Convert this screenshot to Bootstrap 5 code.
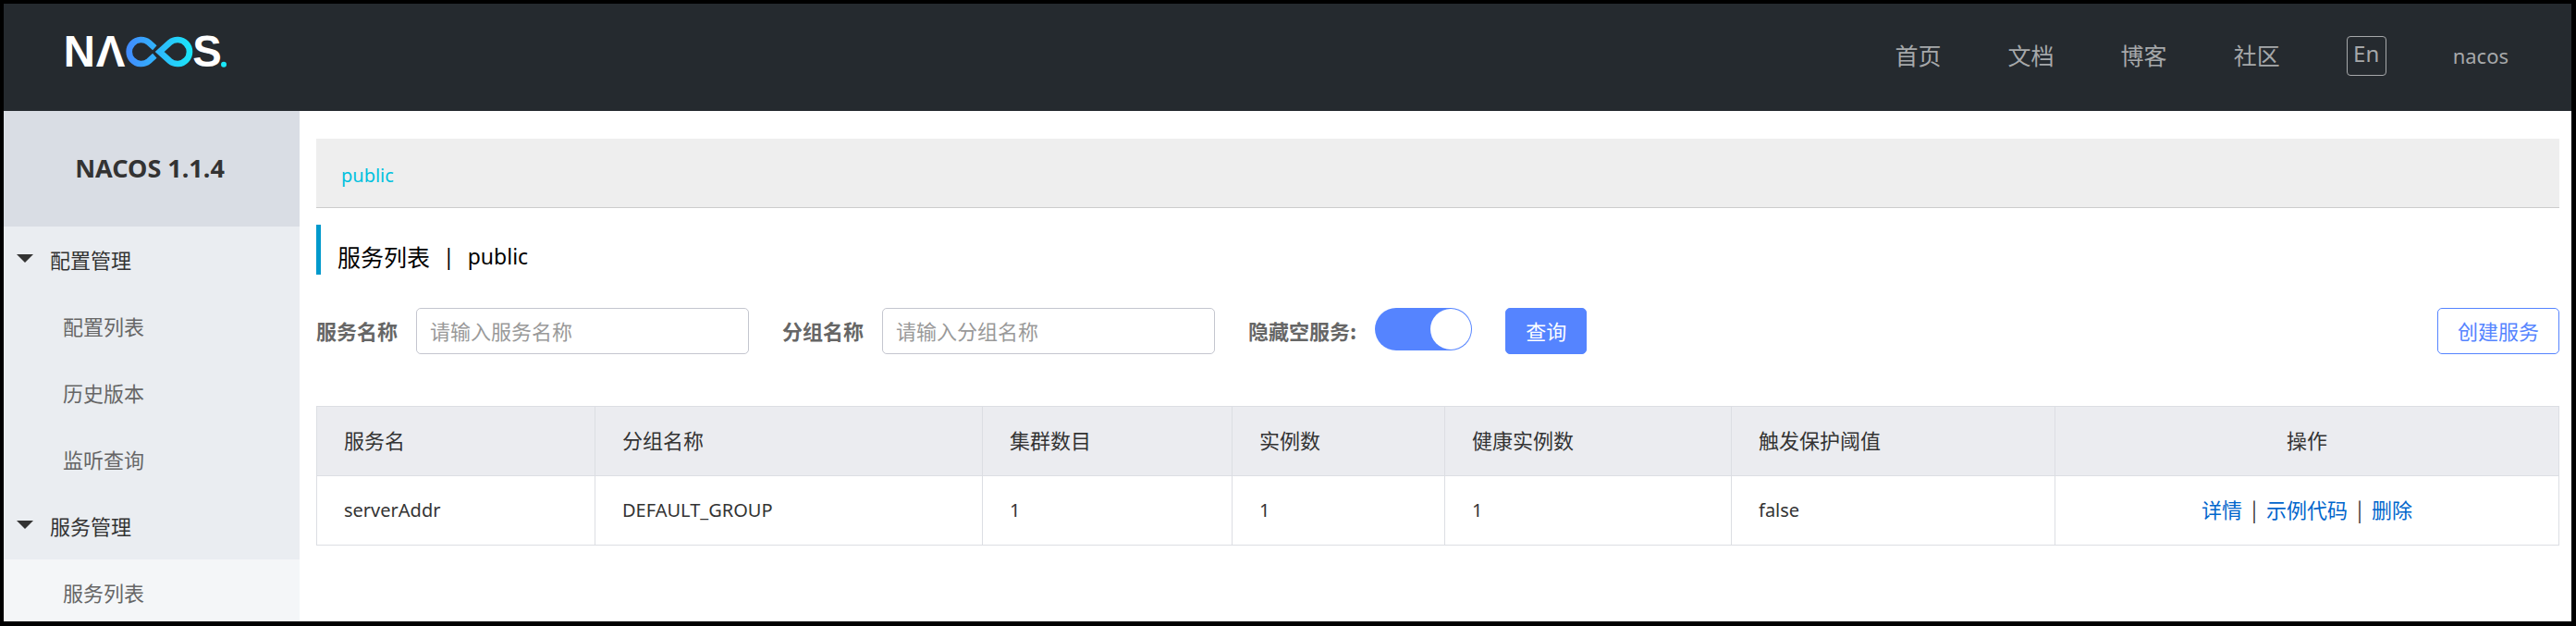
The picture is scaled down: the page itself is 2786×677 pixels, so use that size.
<!DOCTYPE html>
<html lang="zh-CN">
<head>
<meta charset="utf-8">
<meta name="viewport" content="width=device-width, initial-scale=1">
<title>NACOS</title>
<link href="https://cdn.jsdelivr.net/npm/bootstrap@5.3.0/dist/css/bootstrap.min.css" rel="stylesheet">
<style>
  body { font-family: "Noto Sans", "Noto Sans CJK SC", sans-serif; font-size: 20px; color: #333; }
  .zh { font-size: 22px; font-family: "Noto Sans CJK SC", sans-serif; }
  .shell { border: 4px solid #000; border-right-width: 5px; border-bottom-width: 5px; background: #fff; }

  .topbar { min-height: 116px; background: #252a2f; padding: 0 68px 4px; }
  .topbar .logo { margin-bottom: 8px; }
  .topbar .logo svg { overflow: visible; }
  .topbar nav { gap: 72px; }
  .topbar nav a { color: #a6a8aa; text-decoration: none; font-size: 22px; line-height: 40px; }
  .topbar nav a.zh { font-size: 25px; padding-bottom: 2px; }
  .lang { width: 43px; height: 43px; font-size: 24px; line-height: 36px; padding: 0 0 5px; color: #a6a8aa; background: none; border: 1px solid #a6a8aa; border-radius: 4px; }

  .body-row { min-height: 0; }
  .side { width: 320px; background: #eaedf1; overflow-y: auto; scrollbar-width: none; }
  .side-title { height: 125px; background: #d9dde4; font-size: 27px; padding-right: 4px; }
  .side button, .side a { height: 72px; width: 100%; display: flex; align-items: center; text-decoration: none; background: none; border: 0; }
  .side button { padding: 0 14px 2px; gap: 18px; color: #333; }
  .side button svg { margin-bottom: 2px; }
  .side a { padding: 0 0 2px 64px; color: #666; }
  .side a.active { background: #f4f6f8; }

  .content { padding: 30px 13px 30px 18px; }
  .ns-bar { height: 75px; background: #eee; border-bottom: 1px solid #ccc; padding: 6px 27px 0; }
  .ns-bar a { color: #00c1de; text-decoration: none; }
  .page-title { margin: 18px 0 0; height: 54px; border-left: 5px solid #09c; padding: 15px 0 0 18px; gap: 14px; font-size: 23px; line-height: 38px; font-weight: 400; color: #000; }
  .page-title .zh { font-size: 25px; }
  .filters { margin-top: 36px; }
  .filters label { width: 88px; white-space: nowrap; font-weight: 700; color: #666; line-height: 48px; padding-bottom: 2px; }
  .filters label.wide { width: auto; }
  .filters .form-control { width: 360px; height: 50px; border: 1px solid #c4c6cf; border-radius: 5px; padding: 0 14px 3px; margin: 0 36px 0 20px; flex: none; }
  .filters .form-control::placeholder { color: #999; }
  .filters .toggle { appearance: none; width: 105px; height: 46px; margin: 0 36px 4px 20px; border-radius: 23px; background: #5584ff; position: relative; }
  .filters .toggle::after { content: ""; position: absolute; right: 1px; top: 1px; width: 44px; height: 44px; border-radius: 50%; background: #fff; }
  .filters .btn { height: 50px; padding: 0 21px 2px; border-radius: 5px; border: 1px solid #5584ff; line-height: 44px; }
  .btn-query { background: #5584ff; color: #fff; }
  .btn-create { background: #fff; color: #5584ff; }

  .services { margin: 56px 0 0; table-layout: fixed; color: #333; border-color: #dcdee3; }
  .services > :not(caption) > * > * { height: 75px; padding: 0 29px; vertical-align: middle; border: 1px solid #dcdee3; color: #333; font-weight: 400; }
  .services > thead > tr > th, .services > tbody > tr > td.zh { padding-bottom: 3px; }
  .services thead th { background: #ebecf0; }
  .services a { color: #06c; text-decoration: none; }
  .sep { margin: 0 10px; }
</style>
</head>
<body>
<div class="shell vh-100 d-flex flex-column overflow-hidden">
  <header class="topbar d-flex align-items-center justify-content-between">
    <a href="#" class="logo" aria-label="NACOS">
      <svg class="d-block" width="174" height="34" viewBox="36 28 522 102">
        <defs>
          <linearGradient id="loop" gradientUnits="userSpaceOnUse" x1="228" y1="0" x2="446" y2="0">
            <stop offset="0" stop-color="#4389ff"/><stop offset="1" stop-color="#19e8f8"/>
          </linearGradient>
        </defs>
        <g fill="#fff" font-family="Liberation Sans" font-weight="700" font-size="142">
          <text x="26" y="128">N</text><text x="131" y="128">Λ</text><text x="445" y="128">S</text>
        </g>
        <g fill="none" stroke="url(#loop)" stroke-width="20">
          <path d="M322 66 L303 49 A39 39 0 1 0 303 109 L322 92"/>
          <path d="M338 79 L371 49 A39 39 0 1 1 371 109 Z"/>
        </g>
        <circle cx="546" cy="120" r="9" fill="#19e8f8"/>
      </svg>
    </a>
    <nav class="d-flex align-items-center">
      <a href="#" class="zh">首页</a>
      <a href="#" class="zh">文档</a>
      <a href="#" class="zh">博客</a>
      <a href="#" class="zh">社区</a>
      <button type="button" class="lang">En</button>
      <a href="#">nacos</a>
    </nav>
  </header>

  <div class="body-row d-flex flex-grow-1">
    <aside class="side flex-shrink-0">
      <div class="side-title d-flex align-items-center justify-content-center fw-bold">NACOS 1.1.4</div>
      <button type="button" class="zh"><svg width="18" height="9" viewBox="0 0 18 9"><path d="M0 0H18L9 9Z" fill="#333"/></svg>配置管理</button>
      <a href="#" class="zh">配置列表</a>
      <a href="#" class="zh">历史版本</a>
      <a href="#" class="zh">监听查询</a>
      <button type="button" class="zh"><svg width="18" height="9" viewBox="0 0 18 9"><path d="M0 0H18L9 9Z" fill="#333"/></svg>服务管理</button>
      <a href="#" class="zh active">服务列表</a>
    </aside>

    <main class="content flex-grow-1">
      <div class="ns-bar d-flex align-items-center"><a href="#">public</a></div>
      <h1 class="page-title d-flex"><span class="zh">服务列表</span><span>|</span><span>public</span></h1>

      <form class="filters d-flex align-items-center">
        <label class="zh" for="svc">服务名称</label>
        <input class="form-control zh" id="svc" type="text" placeholder="请输入服务名称">
        <label class="zh" for="grp">分组名称</label>
        <input class="form-control zh" id="grp" type="text" placeholder="请输入分组名称">
        <label class="zh wide" for="hide">隐藏空服务:</label>
        <input class="toggle" id="hide" type="checkbox" role="switch" checked>
        <button type="button" class="btn btn-query zh">查询</button>
        <button type="button" class="btn btn-create zh ms-auto">创建服务</button>
      </form>

      <table class="table services">
        <colgroup>
          <col style="width:301px"><col style="width:419px"><col style="width:270px"><col style="width:230px"><col style="width:310px"><col style="width:350px"><col>
        </colgroup>
        <thead>
          <tr class="zh"><th>服务名</th><th>分组名称</th><th>集群数目</th><th>实例数</th><th>健康实例数</th><th>触发保护阈值</th><th class="text-center">操作</th></tr>
        </thead>
        <tbody>
          <tr>
            <td>serverAddr</td><td>DEFAULT_GROUP</td><td>1</td><td>1</td><td>1</td><td>false</td>
            <td class="text-center zh"><a href="#">详情</a><span class="sep">|</span><a href="#">示例代码</a><span class="sep">|</span><a href="#">删除</a></td>
          </tr>
        </tbody>
      </table>
    </main>
  </div>
</div>
<script src="https://cdn.jsdelivr.net/npm/bootstrap@5.3.0/dist/js/bootstrap.bundle.min.js"></script>
</body>
</html>
